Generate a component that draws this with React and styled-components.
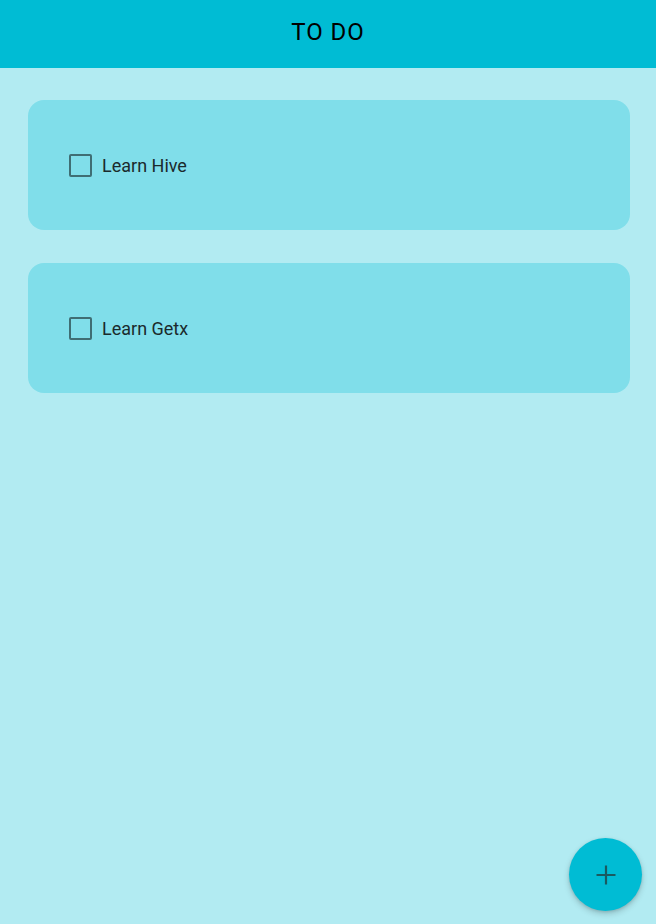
import React from "react";
import styled, { createGlobalStyle } from "styled-components";

const Global = createGlobalStyle`
  html, body { margin: 0; padding: 0; }
  body {
    font-family: Roboto, "Noto Sans", "Liberation Sans", sans-serif;
    background: #b2ebf2;
  }
`;

const Page = styled.div`
  position: relative;
  width: 656px;
  height: 924px;
  background: #b2ebf2;
  overflow: hidden;
`;

const AppBar = styled.header`
  height: 68px;
  box-sizing: border-box;
  padding-bottom: 5px;
  background: #00bcd4;
  display: flex;
  align-items: center;
  justify-content: center;
`;

const Title = styled.h1`
  margin: 0;
  font-family: Roboto, sans-serif;
  font-weight: 400;
  font-size: 24px;
  line-height: 28px;
  color: #000;
  letter-spacing: 1px;
`;

const List = styled.main`
  display: flex;
  flex-direction: column;
  gap: 33px;
  padding: 32px 26px 0 28px;
`;

const Card = styled.div`
  height: 130px;
  background: #80deea;
  border-radius: 16px;
  display: flex;
  align-items: center;
  padding-left: 41px;
  box-sizing: border-box;
`;

const Box = styled.span`
  width: 23px;
  height: 23px;
  box-sizing: border-box;
  border: 2.5px solid #3f6e74;
  border-radius: 2px;
  flex: none;
`;

const Label = styled.span`
  margin-left: 10px;
  font-size: 18px;
  color: #1b2a2c;
  font-family: Roboto, sans-serif;
`;

const Fab = styled.button`
  position: absolute;
  right: 14px;
  bottom: 13px;
  width: 73px;
  height: 73px;
  border-radius: 50%;
  border: none;
  background: #00bcd4;
  box-shadow: 0 3px 6px rgba(0, 0, 0, 0.18), 0 1px 3px rgba(0, 0, 0, 0.12);
  display: flex;
  align-items: center;
  justify-content: center;
  padding: 0;
  cursor: pointer;
`;

const todos = ["Learn Hive", "Learn Getx"];

function Todo({ text }) {
  return (
    <Card>
      <Box />
      <Label>{text}</Label>
    </Card>
  );
}

export default function App() {
  return (
    <>
      <Global />
      <Page>
        <AppBar>
          <Title>TO DO</Title>
        </AppBar>
        <List>
          {todos.map((t) => (
            <Todo key={t} text={t} />
          ))}
        </List>
        <Fab aria-label="add">
          <svg width="20" height="20" viewBox="0 0 20 20">
            <path d="M10 0.5v19M0.5 10h19" stroke="#1a5a60" strokeWidth="2.2" fill="none" />
          </svg>
        </Fab>
      </Page>
    </>
  );
}
